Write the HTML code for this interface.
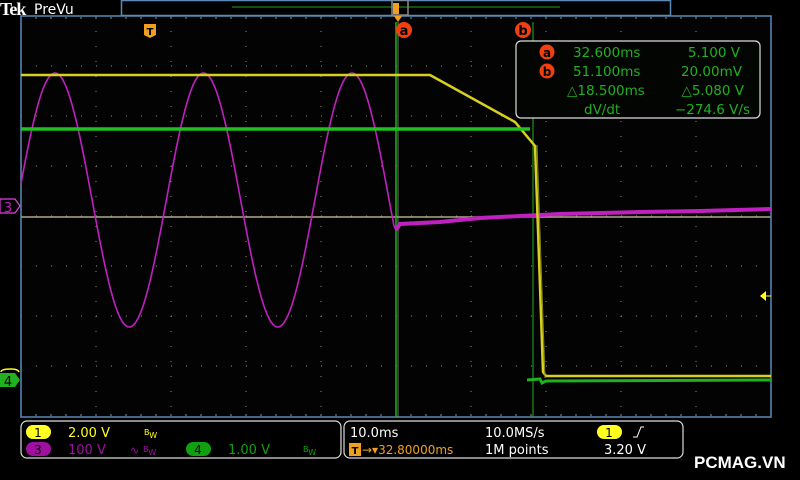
<!DOCTYPE html>
<html><head><meta charset="utf-8"><style>
html,body{margin:0;padding:0;background:#000;}
body{width:800px;height:480px;overflow:hidden;position:relative;font-family:"DejaVu Sans","Liberation Sans",sans-serif;}
svg{position:absolute;left:0;top:0;}
</style></head><body>
<svg width="800" height="480" viewBox="0 0 800 480" xmlns="http://www.w3.org/2000/svg">
<rect width="800" height="480" fill="#000"/>
<rect x="21" y="16" width="750" height="401" fill="#030303"/>
<g id="grid" stroke="#9a9070" stroke-width="1"></g>
<line x1="21" y1="217" x2="771" y2="217" stroke="#b0a888" stroke-width="1.5"/>
<line x1="396" y1="16" x2="396" y2="417" stroke="#a09880" stroke-width="1" stroke-dasharray="1 9"/>
<rect x="21" y="16" width="750" height="401" fill="none" stroke="#5b8ab8" stroke-width="1.5"/>
<text x="0" y="15" fill="#fff" font-family="Liberation Serif,serif" font-weight="bold" font-size="18" letter-spacing="-1">Tek</text>
<text x="34" y="14" fill="#fff" font-size="14" font-family="DejaVu Sans,sans-serif">PreVu</text>
<rect x="121.5" y="0.5" width="549" height="15" fill="#000" stroke="#5b8ab8" stroke-width="1.5"/>
<line x1="232" y1="7" x2="560" y2="7" stroke="#22a020" stroke-width="1"/>
<rect x="392" y="0" width="16" height="15" fill="none" stroke="#888" stroke-width="1.5"/>
<rect x="393" y="3" width="6" height="11" fill="#f0a020"/>
<polygon points="394,16 402,16 398,22" fill="#f0a020"/>
<path d="M144,24 h12 v11 l-6,3 l-6,-3 z" fill="#f0a020"/>
<text x="150" y="35" fill="#000" font-size="10" font-weight="bold" text-anchor="middle">T</text>
<line x1="396" y1="22" x2="396" y2="417" stroke="#22b020" stroke-width="1.5"/>
<line x1="398" y1="22" x2="398" y2="417" stroke="#909090" stroke-width="0.8"/>
<line x1="533" y1="22" x2="533" y2="417" stroke="#22b020" stroke-width="1"/>
<circle cx="404" cy="30" r="8" fill="#f04010"/><text x="404" y="35" fill="#000" font-size="13" font-weight="bold" text-anchor="middle">a</text>
<circle cx="523" cy="30" r="8" fill="#f04010"/><text x="523" y="35" fill="#000" font-size="13" font-weight="bold" text-anchor="middle">b</text>
<polyline id="sine" fill="none" stroke="#c020c0" stroke-width="1.6"/>
<path d="M396,230 L400,224 L440,222 L480,218 L560,214 L640,212 L700,211 L771,209" fill="none" stroke="#c020c0" stroke-width="4"/>
<path d="M21,75 L430,75 L515,122 L530,140 L535,146 L538,230 L543,372 L546,376 L771,376" fill="none" stroke="#d8d020" stroke-width="2.5"/>
<path d="M21,129 L530,129" fill="none" stroke="#20c020" stroke-width="3.5"/>
<path d="M527,380 L540,379 L542,383 L546,381 L771,380" fill="none" stroke="#20b020" stroke-width="3"/>
<line x1="537" y1="145" x2="545" y2="378" stroke="#8a8a20" stroke-width="1"/>
<rect x="516" y="41" width="244" height="77" rx="5" fill="#030503" stroke="#ddd" stroke-width="1.2"/>
<circle cx="547" cy="52" r="7.5" fill="#f04010"/><text x="547" y="57" fill="#000" font-size="12" font-weight="bold" text-anchor="middle">a</text>
<circle cx="547" cy="71" r="7.5" fill="#f04010"/><text x="547" y="76" fill="#000" font-size="12" font-weight="bold" text-anchor="middle">b</text>
<g fill="#20b020" font-size="13.5">
<text x="573" y="57">32.600ms</text><text x="740" y="57" text-anchor="end">5.100 V</text>
<text x="573" y="76">51.100ms</text><text x="742" y="76" text-anchor="end">20.00mV</text>
<text x="567" y="95">△18.500ms</text><text x="744" y="95" text-anchor="end">△5.080 V</text>
<text x="584" y="114">dV/dt</text><text x="750" y="114" text-anchor="end">−274.6 V/s</text>
</g>
<polygon points="760,296 766,291 766,301" fill="#ffff20"/><line x1="765" y1="296" x2="771" y2="296" stroke="#ffff20"/>
<path d="M0,199 h15 l5,7 l-5,7 h-15 z" fill="#000" stroke="#e040e0" stroke-width="1.2"/>
<text x="8" y="212" fill="#c020c0" font-size="13" text-anchor="middle">3</text>
<path d="M1,372 q0,-3 10,-3 q7,0 8,3" fill="none" stroke="#ffff20" stroke-width="1.5"/>
<path d="M0,373 h15 l5,7 l-5,7 h-15 z" fill="#20b020"/>
<text x="8" y="386" fill="#000" font-size="13" text-anchor="middle">4</text>
<rect x="21" y="421" width="320" height="37" rx="6" fill="none" stroke="#ddd" stroke-width="1.2"/>
<rect x="344" y="421" width="339" height="37" rx="6" fill="none" stroke="#ddd" stroke-width="1.2"/>
<rect x="26" y="425" width="25" height="14" rx="7" fill="#ffff20"/><text x="38" y="437" font-size="12" fill="#000" text-anchor="middle">1</text>
<text x="68" y="437" font-size="13" fill="#ffff20">2.00 V</text>
<text x="144" y="435" font-size="8" fill="#ffff20">B<tspan dy="3">W</tspan></text>
<rect x="26" y="442" width="25" height="14" rx="7" fill="#a010a0"/><text x="38" y="454" font-size="12" fill="#000" text-anchor="middle">3</text>
<text x="68" y="454" font-size="13" fill="#a010a0">100 V</text>
<text x="130" y="454" font-size="11" fill="#a010a0">∿</text><text x="143" y="452" font-size="8" fill="#a010a0">B<tspan dy="3">W</tspan></text>
<rect x="186" y="442" width="25" height="14" rx="7" fill="#10a010"/><text x="198" y="454" font-size="12" fill="#000" text-anchor="middle">4</text>
<text x="228" y="454" font-size="13" fill="#10a010">1.00 V</text>
<text x="303" y="452" font-size="8" fill="#10a010">B<tspan dy="3">W</tspan></text>
<text x="350" y="437" font-size="13" fill="#fff">10.0ms</text>
<rect x="349" y="443" width="12" height="13" fill="#f0a020"/><text x="355" y="454" font-size="10" font-weight="bold" fill="#000" text-anchor="middle">T</text>
<text x="362" y="454" font-size="12" fill="#f0a020">→▾32.80000ms</text>
<text x="485" y="437" font-size="13" fill="#fff">10.0MS/s</text>
<text x="485" y="454" font-size="13" fill="#fff">1M points</text>
<rect x="597" y="425" width="25" height="14" rx="7" fill="#ffff20"/><text x="609" y="437" font-size="12" fill="#000" text-anchor="middle">1</text>
<path d="M633,437 h4 l4,-10 h3" fill="none" stroke="#fff" stroke-width="1"/>
<text x="604" y="454" font-size="13" fill="#fff">3.20 V</text>
<text x="694" y="468" font-size="17" font-weight="bold" fill="#fff" font-family="Liberation Sans,sans-serif">PCMAG.VN</text>
</svg>
<script>
var g=document.getElementById('grid'),h='';
for(var i=1;i<10;i++){var x=21+75*i;h+='<line x1="'+x+'" y1="16" x2="'+x+'" y2="417" stroke-dasharray="1 14" />';}
for(var j=1;j<8;j++){var y=16+50*j;h+='<line x1="21" y1="'+y+'" x2="771" y2="'+y+'" stroke-dasharray="1 14" />';}
for(var k=0;k<50;k++){var x2=21+15*k;h+='<line x1="'+x2+'" y1="17" x2="'+x2+'" y2="19"/><line x1="'+x2+'" y1="414" x2="'+x2+'" y2="416"/>';}
g.innerHTML=h;
var p=[];for(var x=21;x<=394;x+=1){var y=200-127*Math.cos(2*Math.PI*(x-55)/148.5);p.push(x+','+y.toFixed(1));}
p.push('396,230');document.getElementById('sine').setAttribute('points',p.join(' '));
</script>
</body></html>
